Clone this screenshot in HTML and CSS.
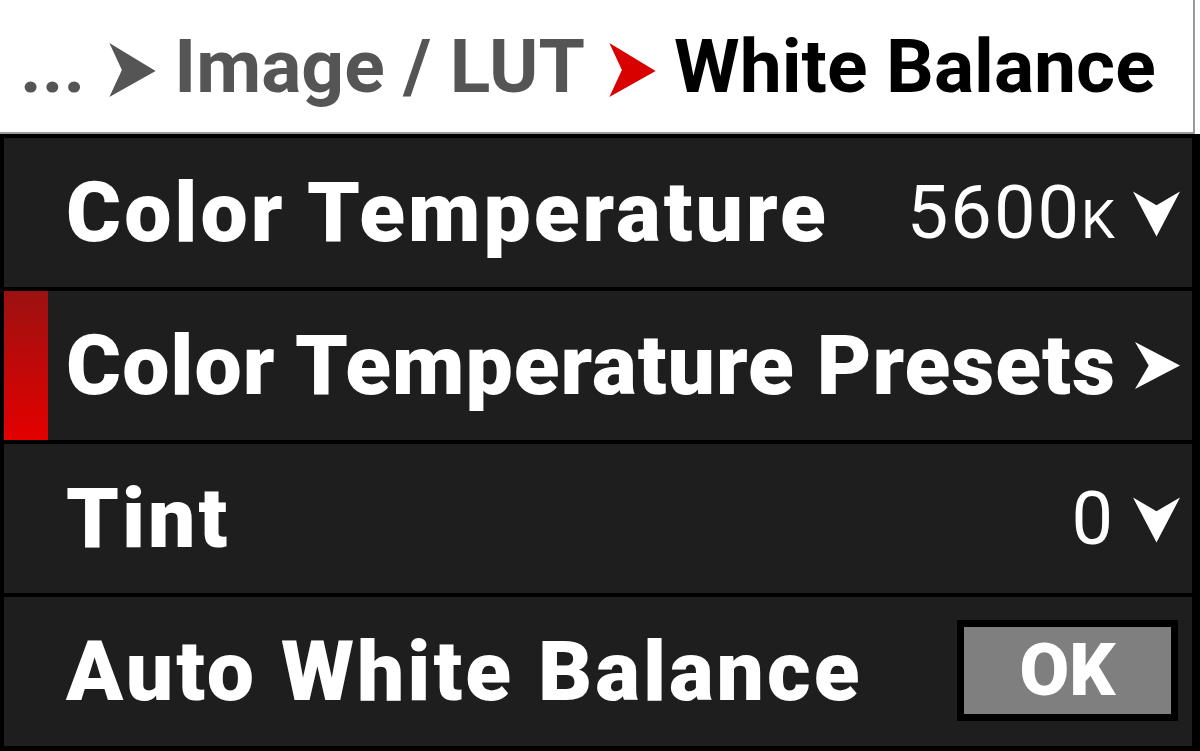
FILE: index.html
```html
<!DOCTYPE html>
<html>
<head>
<meta charset="utf-8">
<link rel="stylesheet" href="styles.css">
</head>
<body>
<div class="screen">
  <header class="crumbs">
    <span class="dots">...</span>
    <svg class="crumb-arrow" viewBox="0 0 48 56"><polygon points="0,0 48,29 0,56 13,28" fill="#555555"/></svg>
    <span class="crumb">Image / LUT</span>
    <svg class="crumb-arrow" viewBox="0 0 48 56"><polygon points="0,0 48,29 0,56 13,28" fill="#d90000"/></svg>
    <span class="current">White Balance</span>
  </header>
  <main class="menu">
    <div class="row">
      <span class="label">Color Temperature</span>
      <span class="value">5600<span class="unit">K</span></span>
      <svg class="chev-down" viewBox="0 0 48 46"><polygon points="0,0 24,14 48,0 24,46" fill="#ffffff"/></svg>
    </div>
    <div class="row selected">
      <span class="label fit">Color Temperature Presets</span>
      <svg class="chev-right" viewBox="0 0 46 48"><polygon points="0,0 46,24 0,48 14,24" fill="#ffffff"/></svg>
    </div>
    <div class="row">
      <span class="label">Tint</span>
      <span class="value">0</span>
      <svg class="chev-down" viewBox="0 0 48 46"><polygon points="0,0 24,14 48,0 24,46" fill="#ffffff"/></svg>
    </div>
    <div class="row">
      <span class="label">Auto White Balance</span>
      <span class="ok-btn"><span class="ok-inner">OK</span></span>
    </div>
  </main>
</div>
</body>
</html>
```
FILE: styles.css
```css
html, body {
  margin: 0;
  padding: 0;
  background: #000;
}
.screen {
  width: 1200px;
  height: 751px;
  overflow: hidden;
  background: #000;
  font-family: Roboto, "Liberation Sans", sans-serif;
  display: flex;
  flex-direction: column;
}
.crumbs {
  height: 132px;
  background: #fff;
  border-bottom: 2px solid #9a9a9a;
  border-right: 2px solid #9a9a9a;
  margin-right: 5px;
  box-shadow: 5px 0 0 #fff;
  display: flex;
  align-items: center;
  padding-left: 20px;
  font-weight: 700;
  font-size: 75px;
  white-space: nowrap;
  flex-shrink: 0;
}
.dots {
  color: #555;
  margin-right: 24px;
}
.crumb-arrow {
  flex-shrink: 0;
  width: 47px;
  height: 54px;
  margin-right: 18px;
  margin-top: 8px;
}
.crumb {
  color: #555;
  margin-right: 24px;
}
.current {
  color: #000;
}
.menu {
  flex: 1;
  display: flex;
  flex-direction: column;
  gap: 4px;
  padding: 4px 8px 0 4px;
}
.row {
  height: 149px;
  flex-shrink: 0;
  background: #1e1e1e;
  display: flex;
  align-items: center;
  padding: 0 12px 0 62px;
  color: #fff;
  white-space: nowrap;
}
.row.selected {
  background: linear-gradient(#9c1111, #e40000) left top / 44px 100% no-repeat, #1e1e1e;
}
.label {
  font-weight: 900;
  font-size: 84px;
  letter-spacing: 3px;
  flex: 1;
}
.label.fit {
  letter-spacing: 1px;
}
.value {
  font-weight: 400;
  font-size: 74px;
  letter-spacing: 2px;
  margin-right: 18px;
}
.unit {
  font-size: 54px;
  letter-spacing: 0;
}
.chev-down {
  flex-shrink: 0;
  width: 47px;
  height: 46px;
  margin-top: 2px;
}
.chev-right {
  flex-shrink: 0;
  width: 45px;
  height: 47px;
}
.ok-btn {
  display: flex;
  border: 7px solid #000;
  margin-right: 2px;
  margin-top: -2px;
}
.ok-inner {
  width: 207px;
  height: 87px;
  background: #7f7f7f;
  display: flex;
  align-items: center;
  justify-content: center;
  font-weight: 900;
  font-size: 72px;
  color: #fff;
}
```
